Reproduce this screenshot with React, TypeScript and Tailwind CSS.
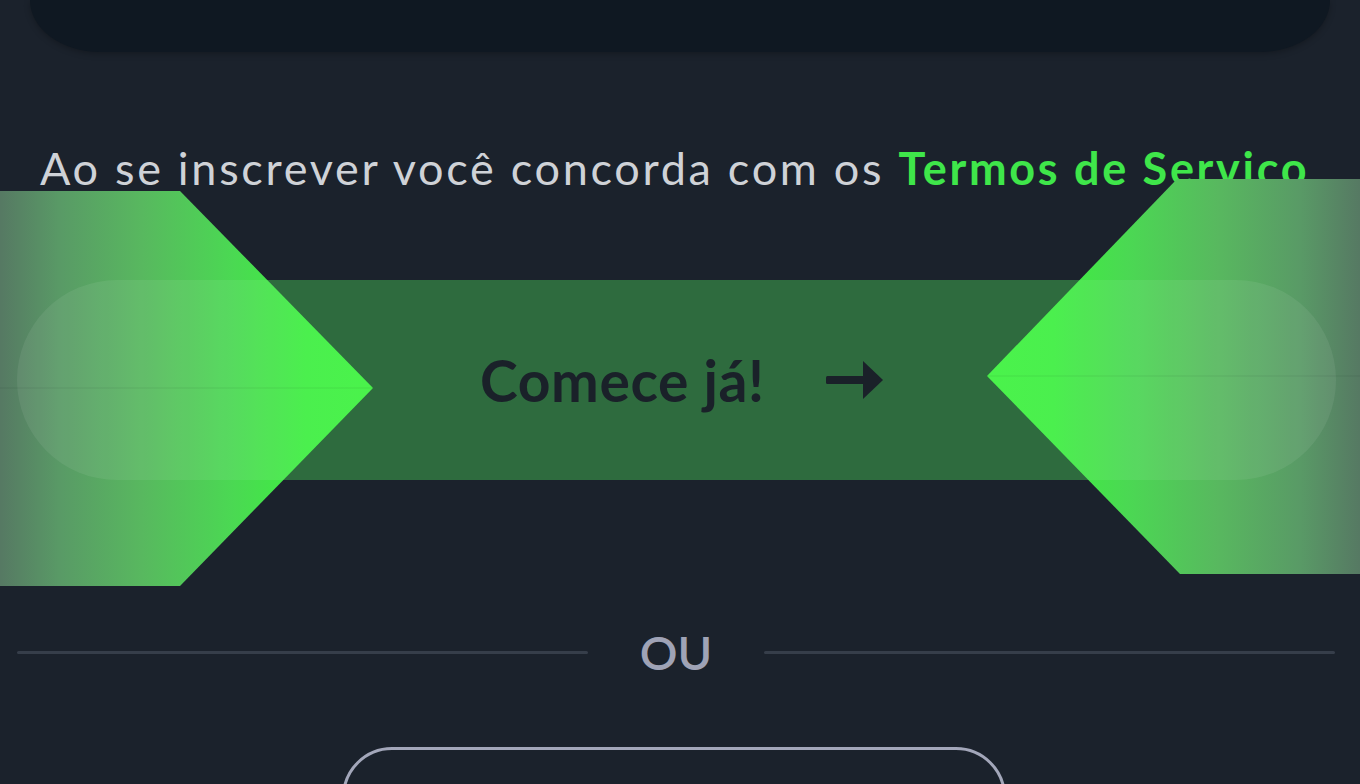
import React from "react";

function ArrowGlyph() {
  return (
    <svg width="58" height="40" viewBox="0 0 58 40" className="shrink-0">
      <rect x="0" y="16" width="42" height="8" rx="1.5" fill="#1a2129" />
      <path d="M37 1 L57 20 L37 39 Z" fill="#1a2129" />
    </svg>
  );
}

function GlowOverlay() {
  return (
    <svg className="pointer-events-none absolute left-0 top-0" width="1360" height="784" viewBox="0 0 1360 784">
      <defs>
        <linearGradient id="gl" x1="0" y1="0" x2="373" y2="0" gradientUnits="userSpaceOnUse">
          <stop offset="0" stopColor="#567963" />
          <stop offset="0.16" stopColor="#599a66" />
          <stop offset="0.38" stopColor="#58b85f" />
          <stop offset="0.62" stopColor="#4bd853" />
          <stop offset="0.82" stopColor="#3eee41" />
          <stop offset="1" stopColor="#3df23e" />
        </linearGradient>
        <linearGradient id="gr" x1="1360" y1="0" x2="987" y2="0" gradientUnits="userSpaceOnUse">
          <stop offset="0" stopColor="#567963" />
          <stop offset="0.16" stopColor="#599a66" />
          <stop offset="0.38" stopColor="#58b85f" />
          <stop offset="0.62" stopColor="#4bd853" />
          <stop offset="0.82" stopColor="#3eee41" />
          <stop offset="1" stopColor="#3df23e" />
        </linearGradient>
        <clipPath id="shapes">
          <polygon points="0,191 180,191 373,388 180,586 0,586" />
          <polygon points="1360,179 1177,179 987,376 1180,574 1360,574" />
        </clipPath>
      </defs>
      <polygon points="0,191 180,191 373,388 180,586 0,586" fill="url(#gl)" />
      <polygon points="1360,179 1177,179 987,376 1180,574 1360,574" fill="url(#gr)" />
      <rect x="17" y="280" width="1319" height="200" rx="100" fill="#ffffff" fillOpacity="0.07" clipPath="url(#shapes)" />
      <line x1="0" y1="388" x2="373" y2="388" stroke="#000000" strokeOpacity="0.07" strokeWidth="1" />
      <line x1="987" y1="376" x2="1360" y2="376" stroke="#000000" strokeOpacity="0.07" strokeWidth="1" />
    </svg>
  );
}

export default function App() {
  return (
    <div
      className="relative h-[784px] w-full overflow-hidden bg-[#1b222c]"
      style={{ fontFamily: "Lato, 'Noto Sans', sans-serif" }}
    >
      {/* bottom of the card above */}
      <div className="mx-[30px] h-[52px] rounded-b-[70px_52px] bg-[#0f1822] shadow-[0_2px_6px_rgba(0,0,0,0.25)]" />

      <p className="ml-[40px] mt-[86px] whitespace-nowrap text-[45px] leading-[60px] tracking-[2.7px] text-[#cfd2d7]">
        Ao se inscrever você concorda com os{" "}
        <span className="font-bold text-[#3fe64a]">Termos de Serviço</span>
      </p>

      <button className="ml-[17px] mr-[24px] mt-[82px] flex h-[200px] w-[1319px] items-center rounded-full bg-[#2e6b3e] pl-[463px]">
        <span className="text-[57px] font-bold leading-[57px] tracking-[0.6px] text-[#1a2129]">Comece já!</span>
        <span className="ml-[61px]">
          <ArrowGlyph />
        </span>
      </button>

      <div className="ml-[17px] mr-[25px] mt-[148px] flex h-[48px] items-center">
        <div className="h-[3px] flex-1 rounded-full bg-[#363e4a]" />
        <span className="px-[52px] text-[47px] font-semibold leading-[48px] text-[#9fa3b6]">OU</span>
        <div className="h-[3px] flex-1 rounded-full bg-[#363e4a]" />
      </div>

      <div className="ml-[342px] mt-[71px] h-[100px] w-[664px] rounded-[60px] border-[3px] border-[#a3a7ba]" />

      <GlowOverlay />
    </div>
  );
}
